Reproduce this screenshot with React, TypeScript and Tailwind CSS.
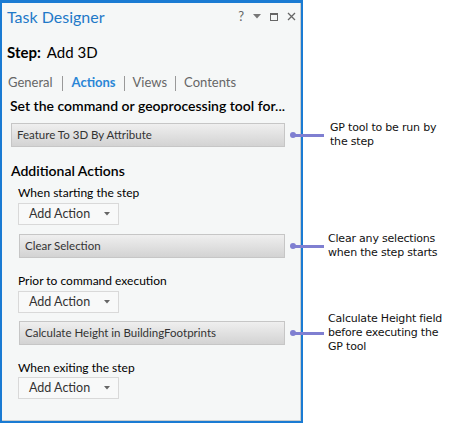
const ui = { fontFamily: "Lato, 'Open Sans', sans-serif" };
const note = { fontFamily: "'DejaVu Sans', Verdana, sans-serif" };

function Callout({ lines, gap }: { lines: string[]; gap: string }) {
  return (
    <div className="absolute left-[288px] top-1/2 flex -translate-y-1/2 items-center">
      <span className="h-[6px] w-[6px] rounded-full bg-[#7f7fd1]" />
      <span className="-ml-[2px] h-[3px] w-[30px] bg-[#7f7fd1]" />
      <div
        className={`${gap} whitespace-nowrap text-[11px] leading-[14px] tracking-[-0.2px] text-[#111]`}
        style={note}
      >
        {lines.map((l) => (
          <div key={l}>{l}</div>
        ))}
      </div>
    </div>
  );
}

function ActionButton({
  label,
  lines,
  wide,
  className,
}: {
  label: string;
  lines: string[];
  wide?: boolean;
  className: string;
}) {
  return (
    <div className={`relative ${className}`}>
      <div
        className={`${wide ? "ml-[9px]" : "ml-[17px]"} mr-[15px] flex h-[24px] items-center border border-[#c6c6c6] bg-gradient-to-b from-[#efefef] to-[#d3d3d3] px-[5px] text-[11.5px] text-[#333]`}
      >
        {label}
      </div>
      <Callout lines={lines} gap={wide ? "ml-[6px]" : "ml-[4px]"} />
    </div>
  );
}

function AddAction({ className }: { className: string }) {
  return (
    <div
      className={`${className} ml-[16px] flex h-[22px] w-[101px] items-center justify-between border border-[#d9d9d9] bg-[#f8f9f9] pl-[10px] pr-[8px] text-[12.5px] text-[#333]`}
    >
      <span>Add Action</span>
      <svg width="6" height="4" viewBox="0 0 6 4">
        <path d="M0 0h6L3 3.5z" fill="#666" />
      </svg>
    </div>
  );
}

export default function App() {
  return (
    <div className="h-[427px] w-[470px] bg-white" style={ui}>
      <div className="h-[423px] w-[303px] border-x-2 border-b-2 border-t-[3px] border-[#1a7bd3]">
        <div className="flex h-full flex-col border-b border-r border-[#c9cccc] bg-[#f5f7f7]">
          <div className="flex h-[27px] items-center justify-between pl-[5px] pr-[4px]">
            <span className="text-[16px] text-[#1f79c8]">Task Designer</span>
            <div className="flex items-center gap-[9px] text-[#666]">
              <span className="text-[13px]">?</span>
              <svg width="8" height="5" viewBox="0 0 8 5">
                <path d="M0 0h8L4 4.5z" fill="#777" />
              </svg>
              <svg width="8" height="8" viewBox="0 0 8 8">
                <rect x="0.5" y="0.5" width="7" height="7" fill="none" stroke="#666" />
                <rect x="0" y="0" width="8" height="2" fill="#666" />
              </svg>
              <svg width="9" height="9" viewBox="0 0 9 9">
                <path d="M1 1l7 7M8 1l-7 7" stroke="#666" strokeWidth="1.3" />
              </svg>
            </div>
          </div>

          <div className="mt-[12px] flex h-[20px] items-center pl-[5px] text-[15px] text-black">
            <span className="font-bold">Step:</span>
            <span className="ml-[6px]">Add 3D</span>
          </div>

          <div className="mt-[11px] flex h-[20px] items-center pl-[6px] text-[13px] text-[#666]">
            <span>General</span>
            <span className="mx-[9px] h-[15px] w-px bg-[#999]" />
            <span className="font-bold text-[#2a86d6]">Actions</span>
            <span className="mx-[8px] h-[15px] w-px bg-[#999]" />
            <span>Views</span>
            <span className="mx-[8px] h-[15px] w-px bg-[#999]" />
            <span>Contents</span>
          </div>

          <div className="mt-[3px] flex h-[18px] items-center pl-[8px] text-[14px] font-semibold text-black">
            Set the command or geoprocessing tool for...
          </div>

          <ActionButton
            wide
            className="mt-[9px]"
            label="Feature To 3D By Attribute"
            lines={["GP tool to be run by", "the step"]}
          />

          <div className="mt-[13px] flex h-[20px] items-center pl-[9px] text-[14px] font-semibold text-black">
            Additional Actions
          </div>

          <div className="mt-[4px] flex h-[18px] items-center pl-[16px] text-[12px] text-black">
            When starting the step
          </div>
          <AddAction className="mt-[1px]" />

          <ActionButton
            className="mt-[9px]"
            label="Clear Selection"
            lines={["Clear any selections", "when the step starts"]}
          />

          <div className="mt-[14px] flex h-[18px] items-center pl-[16px] text-[12px] text-black">
            Prior to command execution
          </div>
          <AddAction className="mt-[1px]" />

          <ActionButton
            className="mt-[8px]"
            label="Calculate Height in BuildingFootprints"
            lines={["Calculate Height field", "before executing the", "GP tool"]}
          />

          <div className="mt-[14px] flex h-[18px] items-center pl-[16px] text-[12px] text-black">
            When exiting the step
          </div>
          <AddAction className="mt-[0px]" />
        </div>
      </div>
    </div>
  );
}
